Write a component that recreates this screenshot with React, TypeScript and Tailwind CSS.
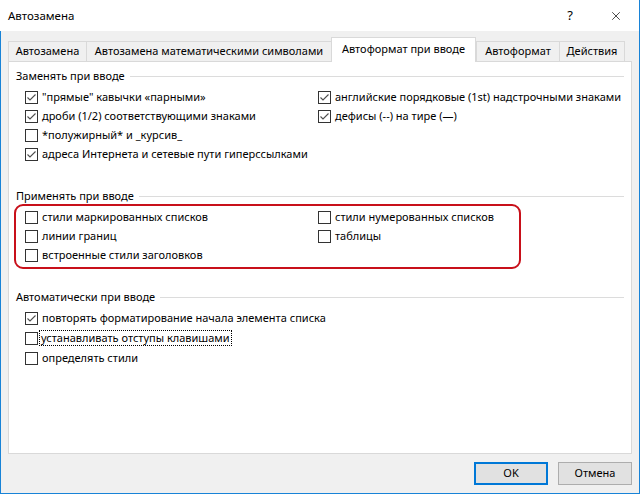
import { X } from "lucide-react";

type Item = { label: string; checked?: boolean; focus?: boolean };

function Box({ checked }: { checked?: boolean }) {
  return (
    <span className="w-[13px] h-[13px] border border-[#333333] bg-white flex items-center justify-center shrink-0">
      {checked && (
        <svg width="11" height="11" viewBox="0 0 11 11">
          <path d="M1.5 5.5 L4 8 L9.5 2.5" stroke="#4d4d4d" fill="none" strokeWidth="1.1" />
        </svg>
      )}
    </span>
  );
}

function Check({ label, checked, focus, h = "h-[19px]" }: Item & { h?: string }) {
  return (
    <div className={`flex items-center gap-[4px] whitespace-nowrap ${h}`}>
      <Box checked={checked} />
      <span className={focus ? "outline outline-1 outline-dotted outline-black px-[1px] -ml-[2px] leading-[14px]" : ""}>
        {label}
      </span>
    </div>
  );
}

function GroupTitle({ title }: { title: string }) {
  return (
    <div className="flex items-center gap-[5px] h-[16px] pl-[7px] pr-[7px]">
      <span className="whitespace-nowrap">{title}</span>
      <div className="flex-1 h-px bg-[#dcdcdc]" />
    </div>
  );
}

const tabs = [
  { label: "Автозамена", w: "w-[78px]" },
  { label: "Автозамена математическими символами", w: "w-[245px]" },
  { label: "Автоформат при вводе", w: "w-[145px]", active: true },
  { label: "Автоформат", w: "w-[83px]" },
  { label: "Действия", w: "w-[66px]" },
];

export default function App() {
  return (
    <div
      className="w-[640px] h-[494px] flex flex-col bg-[#f0f0f0] border-r border-b border-[#1883d7] text-[11px] text-black"
      style={{ fontFamily: '"Noto Sans", "Liberation Sans", sans-serif' }}
    >
      {/* title bar */}
      <div className="h-[31px] bg-white flex items-center shrink-0">
        <span className="pl-[8px] flex-1 text-[11.5px]">Автозамена</span>
        <span className="w-[46px] text-center text-[13px]">?</span>
        <span className="w-[46px] flex justify-center">
          <X className="w-[14px] h-[14px]" strokeWidth={1.2} />
        </span>
      </div>

      <div className="flex-1 flex flex-col border-l border-[#1883d7] pl-[7px] pr-[7px] pt-[6px]">
        {/* tabs */}
        <div className="flex items-end h-[24px] whitespace-nowrap">
          {tabs.map((t) =>
            t.active ? (
              <div
                key={t.label}
                className={`${t.w} h-[25px] -mb-[1px] relative z-10 bg-white border-l border-r border-t border-[#d9d9d9] flex items-center justify-center pb-[1px]`}
              >
                {t.label}
              </div>
            ) : (
              <div
                key={t.label}
                className={`${t.w} h-[20px] border-l border-t border-[#d9d9d9] last:border-r flex items-center justify-center`}
              >
                {t.label}
              </div>
            )
          )}
        </div>

        {/* panel */}
        <div className="h-[393px] bg-white border border-[#d9d9d9] pt-[6px]">
          <GroupTitle title="Заменять при вводе" />
          <div className="grid grid-cols-[293px_1fr] pl-[16px] mt-[4px]">
            <div className="flex flex-col">
              <Check label={'"прямые" кавычки «парными»'} checked />
              <Check label="дроби (1/2) соответствующими знаками" checked />
              <Check label="*полужирный* и _курсив_" />
              <Check label="адреса Интернета и сетевые пути гиперссылками" checked />
            </div>
            <div className="flex flex-col">
              <Check label="английские порядковые (1st) надстрочными знаками" checked />
              <Check label="дефисы (--) на тире (—)" checked />
            </div>
          </div>

          <div className="mt-[24px]">
            <GroupTitle title="Применять при вводе" />
          </div>
          <div className="ml-[5px] w-[507px] border-2 border-[#c8101a] rounded-[9px] py-[2px] pl-[9px] grid grid-cols-[293px_1fr]">
            <div className="flex flex-col">
              <Check label="стили маркированных списков" />
              <Check label="линии границ" />
              <Check label="встроенные стили заголовков" />
            </div>
            <div className="flex flex-col">
              <Check label="стили нумерованных списков" />
              <Check label="таблицы" />
            </div>
          </div>

          <div className="mt-[20px]">
            <GroupTitle title="Автоматически при вводе" />
          </div>
          <div className="flex flex-col pl-[16px] mt-[3px]">
            <Check label="повторять форматирование начала элемента списка" checked h="h-[20px]" />
            <Check label="устанавливать отступы клавишами" focus h="h-[20px]" />
            <Check label="определять стили" h="h-[20px]" />
          </div>
        </div>

        {/* buttons */}
        <div className="flex justify-end gap-[10px] mt-[8px]">
          <button className="w-[74px] h-[23px] bg-[#e1e1e1] border-2 border-[#0078d7]">OK</button>
          <button className="w-[74px] h-[23px] bg-[#e1e1e1] border border-[#adadad]">Отмена</button>
        </div>
      </div>
    </div>
  );
}
